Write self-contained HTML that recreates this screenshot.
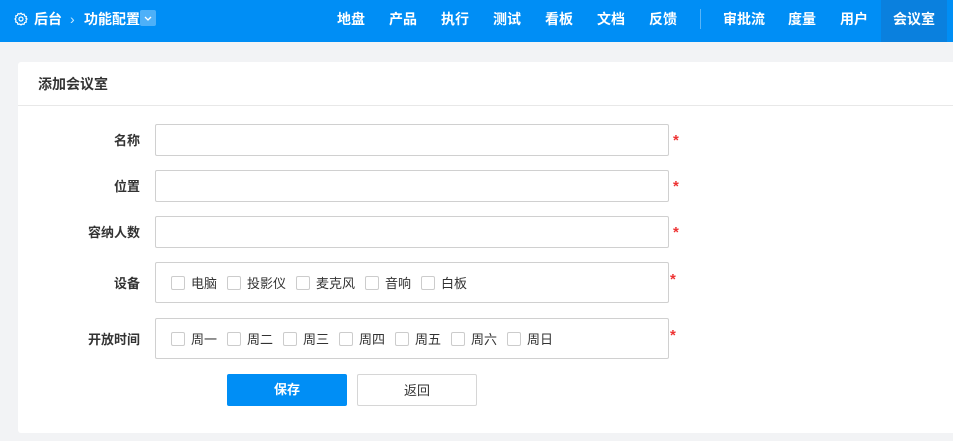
<!DOCTYPE html>
<html><head><meta charset="utf-8"><style>
*{box-sizing:border-box;margin:0;padding:0}
body{width:953px;height:441px;overflow:hidden;background:#f2f3f5;font-family:"Liberation Sans","Noto Sans CJK SC",sans-serif;font-size:13px;color:#333;position:relative}
.hd{position:absolute;left:0;top:0;width:953px;height:42px;background:#008ef5;color:#fff}
.hd span{position:absolute;top:0;line-height:38px;font-size:14px;font-weight:bold}
.act{background:#0a80de;height:42px}
.card{position:absolute;left:18px;top:62px;width:960px;height:371px;background:#fff;border-radius:3px}
.ttl{height:44px;border-bottom:1px solid #e8e8e8;padding-left:20px;line-height:44px;font-weight:bold;font-size:14px;color:#333}
.lbl{position:absolute;right:813px;font-weight:bold;font-size:13px;color:#333}
.in{position:absolute;left:155px;width:514px;border:1px solid #d0d0d0;border-radius:2px;background:#fff}
.st{position:absolute;left:673px;color:#e33;font-size:15px;font-weight:bold}
.cb{position:absolute;width:14px;height:14px;border:1px solid #ccc;border-radius:2px}
.ct{position:absolute;font-size:13px;color:#333}
.btn{position:absolute;top:374px;height:32px;width:120px;text-align:center;line-height:32px;font-size:13px;border-radius:2px}
</style></head><body>
<div class="hd">
<svg style="position:absolute;left:14px;top:12px" width="14" height="14" viewBox="0 0 14 14" fill="none" stroke="#fff" stroke-width="1.2"><circle cx="7" cy="7" r="2"/><path d="M7 1.2l1.3 1.3 1.8-.3.5 1.7 1.7.6-.3 1.8L13 7l-1 1.3.3 1.8-1.7.5-.6 1.7-1.8-.3L7 13l-1.3-1-1.8.3-.5-1.7-1.7-.6.3-1.8L1 7l1-1.3-.3-1.8 1.7-.5.6-1.7 1.8.3z"/></svg>
<span style="left:34px">后台</span>
<span style="left:70px;font-weight:normal;opacity:.8">›</span>
<span style="left:84px">功能配置</span>
<div style="position:absolute;left:140px;top:10px;width:16px;height:16px;background:rgba(255,255,255,.3);border-radius:2px"><svg width="16" height="16"><path d="M5 7l3 3 3-3" stroke="#fff" fill="none" stroke-width="1.3"/></svg></div>
<span style="left:337px">地盘</span><span style="left:389px">产品</span><span style="left:441px">执行</span><span style="left:493px">测试</span><span style="left:545px">看板</span><span style="left:597px">文档</span><span style="left:649px">反馈</span>
<div style="position:absolute;left:700px;top:9px;width:1px;height:20px;background:rgba(255,255,255,.35)"></div>
<span style="left:723px">审批流</span><span style="left:788px">度量</span><span style="left:840px">用户</span>
<span class="act" style="left:881px;width:66px;text-align:center">会议室</span>
</div>
<div class="card"><div class="ttl">添加会议室</div></div>
<div class="lbl" style="top:130px">名称</div>
<div class="in" style="top:124px;height:32px"></div><div class="st" style="top:132px">*</div>
<div class="lbl" style="top:176px">位置</div>
<div class="in" style="top:170px;height:32px"></div><div class="st" style="top:178px">*</div>
<div class="lbl" style="top:222px">容纳人数</div>
<div class="in" style="top:216px;height:32px"></div><div class="st" style="top:224px">*</div>
<div class="lbl" style="top:273px">设备</div>
<div class="in" style="top:262px;height:41px"></div><div class="st" style="top:271px;left:670px">*</div>
<div class="lbl" style="top:329px">开放时间</div>
<div class="in" style="top:318px;height:41px"></div><div class="st" style="top:327px;left:670px">*</div>
<div class="cb" style="left:171px;top:276px"></div><div class="ct" style="left:191px;top:273px">电脑</div>
<div class="cb" style="left:227px;top:276px"></div><div class="ct" style="left:247px;top:273px">投影仪</div>
<div class="cb" style="left:296px;top:276px"></div><div class="ct" style="left:316px;top:273px">麦克风</div>
<div class="cb" style="left:365px;top:276px"></div><div class="ct" style="left:385px;top:273px">音响</div>
<div class="cb" style="left:421px;top:276px"></div><div class="ct" style="left:441px;top:273px">白板</div>
<div class="cb" style="left:171px;top:332px"></div><div class="ct" style="left:191px;top:329px">周一</div>
<div class="cb" style="left:227px;top:332px"></div><div class="ct" style="left:247px;top:329px">周二</div>
<div class="cb" style="left:283px;top:332px"></div><div class="ct" style="left:303px;top:329px">周三</div>
<div class="cb" style="left:339px;top:332px"></div><div class="ct" style="left:359px;top:329px">周四</div>
<div class="cb" style="left:395px;top:332px"></div><div class="ct" style="left:415px;top:329px">周五</div>
<div class="cb" style="left:451px;top:332px"></div><div class="ct" style="left:471px;top:329px">周六</div>
<div class="cb" style="left:507px;top:332px"></div><div class="ct" style="left:527px;top:329px">周日</div>
<div class="btn" style="left:227px;background:#008ef5;color:#fff;font-weight:bold">保存</div>
<div class="btn" style="left:357px;border:1px solid #d6d6d6;background:#fff">返回</div>
</body></html>
